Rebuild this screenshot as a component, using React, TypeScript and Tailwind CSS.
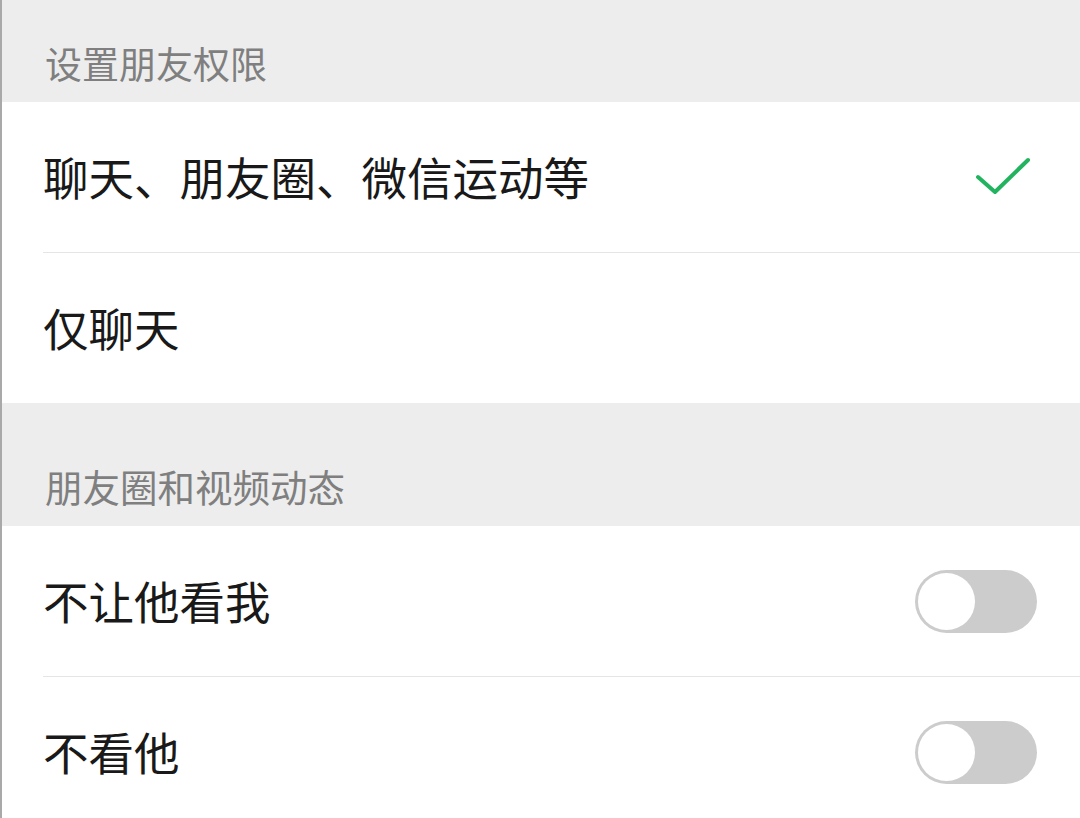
import React, { useState } from 'react';

const font = { fontFamily: '"Noto Sans CJK SC", "Noto Sans", sans-serif' };

function Toggle({ on, onChange }: { on: boolean; onChange: () => void }) {
  return (
    <button
      onClick={onChange}
      className={`relative w-[122px] h-[63px] rounded-full ${on ? 'bg-[#07c160]' : 'bg-[#cccccc]'}`}
    >
      <span
        className={`absolute top-[3px] w-[57px] h-[57px] rounded-full bg-white ${on ? 'left-[62px]' : 'left-[3px]'}`}
      />
    </button>
  );
}

function Check() {
  return (
    <svg width="56" height="40" viewBox="0 0 56 40" fill="none">
      <path d="M3 20 L20 35 L53 3" stroke="#22b35f" strokeWidth="4" strokeLinecap="round" strokeLinejoin="round" />
    </svg>
  );
}

export default function App() {
  const [mode, setMode] = useState<'all' | 'chat'>('all');
  const [hideMe, setHideMe] = useState(false);
  const [hideHim, setHideHim] = useState(false);

  return (
    <div className="min-h-screen h-[818px] overflow-hidden bg-[#ededed] border-l-2 border-[#a9a9a9]" style={font}>
      {/* Permissions */}
      <div className="h-[102px] flex items-end pl-[43px] pb-[20px]">
        <span className="text-[37px] leading-none text-[#7f7f7f]">设置朋友权限</span>
      </div>
      <div className="bg-white">
        <div className="pl-[41px]" onClick={() => setMode('all')}>
          <div className="h-[151px] flex items-center justify-between border-b border-[#e5e5e5] pr-[49px]">
            <span className="text-[45.5px] leading-none text-[#191919]">聊天、朋友圈、微信运动等</span>
            {mode === 'all' && <Check />}
          </div>
        </div>
        <div className="pl-[41px]" onClick={() => setMode('chat')}>
          <div className="h-[150px] flex items-center justify-between pr-[49px]">
            <span className="text-[45.5px] leading-none text-[#191919]">仅聊天</span>
            {mode === 'chat' && <Check />}
          </div>
        </div>
      </div>

      {/* Moments */}
      <div className="h-[123px] flex items-end pl-[43px] pb-[22px]">
        <span className="text-[37.5px] leading-none text-[#7f7f7f]">朋友圈和视频动态</span>
      </div>
      <div className="bg-white">
        <div className="pl-[41px]">
          <div className="h-[151px] flex items-center justify-between border-b border-[#e5e5e5] pr-[43px]">
            <span className="text-[45.5px] leading-none text-[#191919]">不让他看我</span>
            <Toggle on={hideMe} onChange={() => setHideMe(!hideMe)} />
          </div>
        </div>
        <div className="pl-[41px]">
          <div className="h-[150px] flex items-center justify-between pr-[43px]">
            <span className="text-[45.5px] leading-none text-[#191919]">不看他</span>
            <Toggle on={hideHim} onChange={() => setHideHim(!hideHim)} />
          </div>
        </div>
      </div>
    </div>
  );
}
